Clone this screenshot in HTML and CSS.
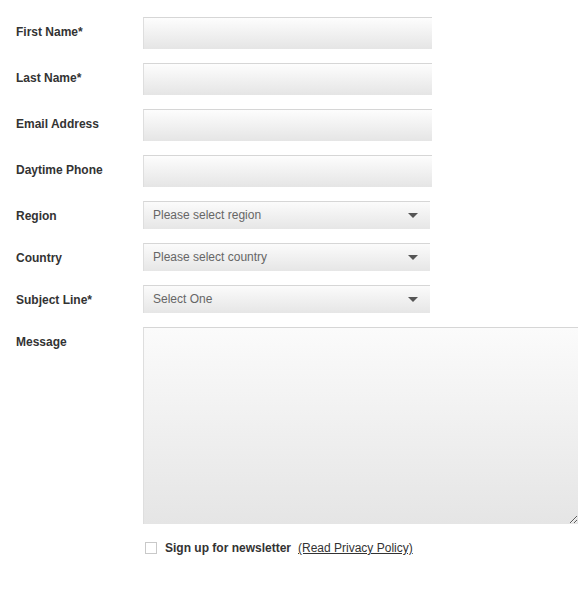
FILE: index.html
```html
<!DOCTYPE html>
<html lang="en">
<head>
    <meta charset="UTF-8">
    <meta name="viewport" content="width=device-width, initial-scale=1.0">
    <title>Contact Us</title>
    <link rel="stylesheet" href="styles.css">
</head>
<body>
    <form class="contact-form">
        <div class="row">
            <label for="firstName">First Name*</label>
            <input type="text" id="firstName" class="text-field">
        </div>
        <div class="row">
            <label for="lastName">Last Name*</label>
            <input type="text" id="lastName" class="text-field">
        </div>
        <div class="row">
            <label for="email">Email Address</label>
            <input type="text" id="email" class="text-field">
        </div>
        <div class="row">
            <label for="phone">Daytime Phone</label>
            <input type="text" id="phone" class="text-field">
        </div>
        <div class="row">
            <label for="region">Region</label>
            <div class="select-wrap">
                <select id="region">
                    <option>Please select region</option>
                </select>
            </div>
        </div>
        <div class="row">
            <label for="country">Country</label>
            <div class="select-wrap">
                <select id="country">
                    <option>Please select country</option>
                </select>
            </div>
        </div>
        <div class="row">
            <label for="subject">Subject Line*</label>
            <div class="select-wrap">
                <select id="subject">
                    <option>Select One</option>
                </select>
            </div>
        </div>
        <div class="row">
            <label for="message">Message</label>
            <textarea id="message"></textarea>
        </div>
        <div class="row">
            <span></span>
            <div class="newsletter">
                <input type="checkbox" id="newsletter">
                <label for="newsletter">Sign up for newsletter</label>
                <a href="#">(Read Privacy Policy)</a>
            </div>
        </div>
    </form>
</body>
</html>
```

FILE: styles.css
```css
body {
    margin: 0;
    font-family: "Liberation Sans", Arial, sans-serif;
    font-size: 12px;
    color: #333;
    background: #fff;
}
.contact-form {
    display: flex;
    flex-direction: column;
    gap: 14px;
    padding: 17px 0 0 16px;
}
.row {
    display: grid;
    grid-template-columns: 127px auto;
    align-items: start;
}
.row > label {
    font-weight: bold;
    line-height: 16px;
    padding-top: 7px;
}
.text-field {
    box-sizing: border-box;
    width: 289px;
    height: 32px;
    margin: 0;
    padding: 0 9px;
    border: none;
    border-top: 1px solid #d6d6d6;
    border-left: 1px solid #dedede;
    background: linear-gradient(#fdfdfd, #e5e5e5);
    font: inherit;
    outline: none;
}
.select-wrap {
    position: relative;
    width: 287px;
}
.select-wrap select {
    box-sizing: border-box;
    width: 100%;
    height: 28px;
    margin: 0;
    padding: 0 9px 1px;
    appearance: none;
    border: none;
    border-top: 1px solid #d6d6d6;
    border-left: 1px solid #dedede;
    border-radius: 0;
    background: linear-gradient(#fbfbfb, #e6e6e6);
    font: inherit;
    color: #666;
    outline: none;
}
.select-wrap::after {
    content: "";
    position: absolute;
    right: 12px;
    top: 12px;
    border-left: 5px solid transparent;
    border-right: 5px solid transparent;
    border-top: 5px solid #555;
    pointer-events: none;
}
textarea {
    box-sizing: border-box;
    width: 435px;
    height: 197px;
    margin: 0;
    padding: 6px 9px;
    border: none;
    border-top: 1px solid #d6d6d6;
    border-left: 1px solid #dedede;
    background: linear-gradient(#fbfbfb, #e5e5e5);
    font: inherit;
    resize: both;
    outline: none;
}
.newsletter {
    display: flex;
    align-items: center;
    padding: 2px 0 0 2px;
    line-height: 16px;
}
.newsletter input {
    appearance: none;
    box-sizing: border-box;
    width: 12px;
    height: 12px;
    margin: 0 8px 0 0;
    border: 1px solid #c9c9c9;
    background: #fff;
}
.newsletter label {
    font-weight: bold;
    margin-right: 7px;
}
.newsletter a {
    color: #333;
}
```
